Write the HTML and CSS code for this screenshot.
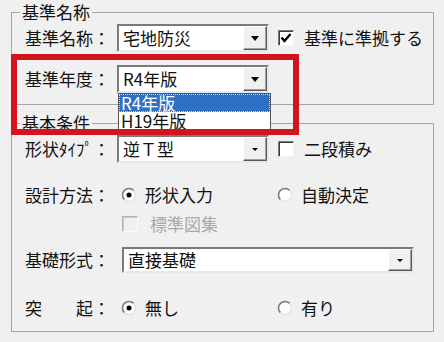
FILE: index.html
```html
<!DOCTYPE html>
<html lang="ja">
<head>
  <meta charset="UTF-8">
  <title>基準設定</title>
  <link rel="stylesheet" href="styles.css">
</head>
<body>

<div class="dialog">
  <fieldset class="group group-name">
    <legend>基準名称</legend>
    <div class="row">
      <span class="label">基準名称：</span>
      <div class="combo">
        <span class="combo-text">宅地防災</span>
        <span class="combo-btn"><i class="arrow"></i></span>
      </div>
      <label class="check">
        <span class="box">
          <svg viewBox="0 0 14 14" width="14" height="14"><path d="M2.5 6.5 L5.5 10 L11.5 3" fill="none" stroke="#000" stroke-width="2.4"/></svg>
        </span>
        基準に準拠する
      </label>
    </div>
    <div class="row row-year">
      <span class="label">基準年度：</span>
      <div class="combo">
        <span class="combo-text">R4年版</span>
        <span class="combo-btn"><i class="arrow"></i></span>
        <ul class="dropdown">
          <li class="selected">R4年版</li>
          <li>H19年版</li>
        </ul>
      </div>
    </div>
  </fieldset>

  <fieldset class="group group-basic">
    <legend>基本条件</legend>
    <div class="row">
      <span class="label">形状ﾀｲﾌﾟ：</span>
      <div class="combo">
        <span class="combo-text">逆Ｔ型</span>
        <span class="combo-btn"><i class="arrow small"></i></span>
      </div>
      <label class="check">
        <span class="box"></span>
        二段積み
      </label>
    </div>
    <div class="row row-method">
      <span class="label">設計方法：</span>
      <label class="opt">
        <svg class="radio" viewBox="0 0 16 16" width="16" height="16">
          <circle cx="8" cy="8" r="6.5" fill="#fff"/>
          <path d="M3.4 12.6 A6.5 6.5 0 0 1 12.6 3.4" fill="none" stroke="#7c7c7c" stroke-width="1.6"/>
          <path d="M12.6 3.4 A6.5 6.5 0 0 1 3.4 12.6" fill="none" stroke="#e4e4e4" stroke-width="1.6"/>
          <circle cx="8" cy="8" r="2.5" fill="#000"/>
        </svg>
        形状入力
      </label>
      <label class="opt">
        <svg class="radio" viewBox="0 0 16 16" width="16" height="16">
          <circle cx="8" cy="8" r="6.5" fill="#fff"/>
          <path d="M3.4 12.6 A6.5 6.5 0 0 1 12.6 3.4" fill="none" stroke="#7c7c7c" stroke-width="1.6"/>
          <path d="M12.6 3.4 A6.5 6.5 0 0 1 3.4 12.6" fill="none" stroke="#e4e4e4" stroke-width="1.6"/>
        </svg>
        自動決定
      </label>
    </div>
    <div class="row row-std">
      <label class="check disabled">
        <span class="box"></span>
        標準図集
      </label>
    </div>
    <div class="row row-base">
      <span class="label">基礎形式：</span>
      <div class="combo combo-wide">
        <span class="combo-text">直接基礎</span>
        <span class="combo-btn"><i class="arrow small"></i></span>
      </div>
    </div>
    <div class="row row-bump">
      <span class="label">突　　起：</span>
      <label class="opt">
        <svg class="radio" viewBox="0 0 16 16" width="16" height="16">
          <circle cx="8" cy="8" r="6.5" fill="#fff"/>
          <path d="M3.4 12.6 A6.5 6.5 0 0 1 12.6 3.4" fill="none" stroke="#7c7c7c" stroke-width="1.6"/>
          <path d="M12.6 3.4 A6.5 6.5 0 0 1 3.4 12.6" fill="none" stroke="#e4e4e4" stroke-width="1.6"/>
          <circle cx="8" cy="8" r="2.5" fill="#000"/>
        </svg>
        無し
      </label>
      <label class="opt">
        <svg class="radio" viewBox="0 0 16 16" width="16" height="16">
          <circle cx="8" cy="8" r="6.5" fill="#fff"/>
          <path d="M3.4 12.6 A6.5 6.5 0 0 1 12.6 3.4" fill="none" stroke="#7c7c7c" stroke-width="1.6"/>
          <path d="M12.6 3.4 A6.5 6.5 0 0 1 3.4 12.6" fill="none" stroke="#e4e4e4" stroke-width="1.6"/>
        </svg>
        有り
      </label>
    </div>
  </fieldset>

  <div class="highlight"></div>
</div>

</body>
</html>
```

FILE: styles.css
```css
body {
  margin: 0;
  background: #f0f0f0;
  font-family: "Noto Sans CJK JP", sans-serif;
  font-size: 17px;
  line-height: 20px;
  color: #111;
}
.dialog {
  position: relative;
  width: 444px;
  height: 342px;
  padding: 2px 10px 0 11px;
  box-sizing: border-box;
}
.group {
  margin: 0;
  min-width: 0;
  padding: 2px 0 11px 13px;
  border: 1px solid #a6a6a6;
}
.group legend {
  margin-left: -5px;
  padding: 0 2px;
  line-height: 20px;
}
.group-basic {
  margin-top: 8px;
  padding-bottom: 9px;
}
.row {
  display: flex;
  align-items: center;
  height: 28px;
}
.row-year { margin-top: 13px; }
.row-method { margin-top: 18px; }
.row-std { margin-top: 5px; height: 20px; }
.row-base { margin-top: 12px; }
.row-bump { margin-top: 20px; }
.label {
  width: 92px;
  flex-shrink: 0;
  white-space: nowrap;
}

/* combo boxes */
.combo {
  position: relative;
  display: flex;
  width: 152px;
  height: 28px;
  box-sizing: border-box;
  border: 2px solid;
  border-color: #7a7a7a #e8e8e8 #e8e8e8 #7a7a7a;
  background: #fff;
}
.combo-wide {
  width: 292px;
  height: 26px;
  margin-left: 5px;
}
.combo-text {
  flex: 1;
  padding-left: 4px;
  line-height: 24px;
  white-space: nowrap;
}
.combo-wide .combo-text { line-height: 22px; }
.combo-btn {
  width: 24px;
  display: flex;
  align-items: center;
  justify-content: center;
  box-sizing: border-box;
  background: #f0f0f0;
  border: 1px solid;
  border-color: #fff #5a5a5a #5a5a5a #fff;
  box-shadow: inset -1px -1px 0 #a0a0a0;
}
.arrow {
  width: 0;
  height: 0;
  border-top: 5px solid #000;
  border-left: 4px solid transparent;
  border-right: 4px solid transparent;
}
.arrow.small {
  border-top-width: 3px;
  border-left-width: 3px;
  border-right-width: 3px;
}
.dropdown {
  position: absolute;
  top: 26px;
  left: -1px;
  z-index: 5;
  width: 153px;
  margin: 0;
  padding: 0;
  list-style: none;
  box-sizing: border-box;
  background: #fff;
  border: 1px solid #555;
}
.dropdown li {
  height: 18px;
  line-height: 18px;
  padding-left: 2px;
  white-space: nowrap;
}
.dropdown li.selected {
  background: #2f6fc4;
  color: #fff;
  outline: 1px dotted #f3d48a;
  outline-offset: -1px;
}

/* checkboxes and radios */
.check {
  display: flex;
  align-items: center;
  white-space: nowrap;
}
.combo + .check { margin-left: 9px; }
.box {
  width: 16px;
  height: 16px;
  margin-right: 10px;
  display: flex;
  align-items: center;
  justify-content: center;
  box-sizing: border-box;
  background: #fff;
  border: 1px solid;
  border-color: #7a7a7a #f4f4f4 #f4f4f4 #7a7a7a;
  box-shadow: inset 1px 1px 0 #3c3c3c;
}
.check.disabled {
  margin-left: 97px;
  color: #a9a9a9;
}
.check.disabled .box {
  margin-right: 12px;
  background: #f0f0f0;
  border-color: #b4b4b4 #fafafa #fafafa #b4b4b4;
  box-shadow: inset 1px 1px 0 #c8c8c8;
}
.opt {
  display: flex;
  align-items: center;
  width: 156px;
  white-space: nowrap;
}
.label + .opt { margin-left: 4px; }
.radio {
  flex-shrink: 0;
  margin-right: 8px;
}

/* red annotation frame */
.highlight {
  position: absolute;
  left: 11px;
  top: 54px;
  width: 288px;
  height: 81px;
  box-sizing: border-box;
  border: 6px solid #d3141d;
  z-index: 6;
  pointer-events: none;
}
```
